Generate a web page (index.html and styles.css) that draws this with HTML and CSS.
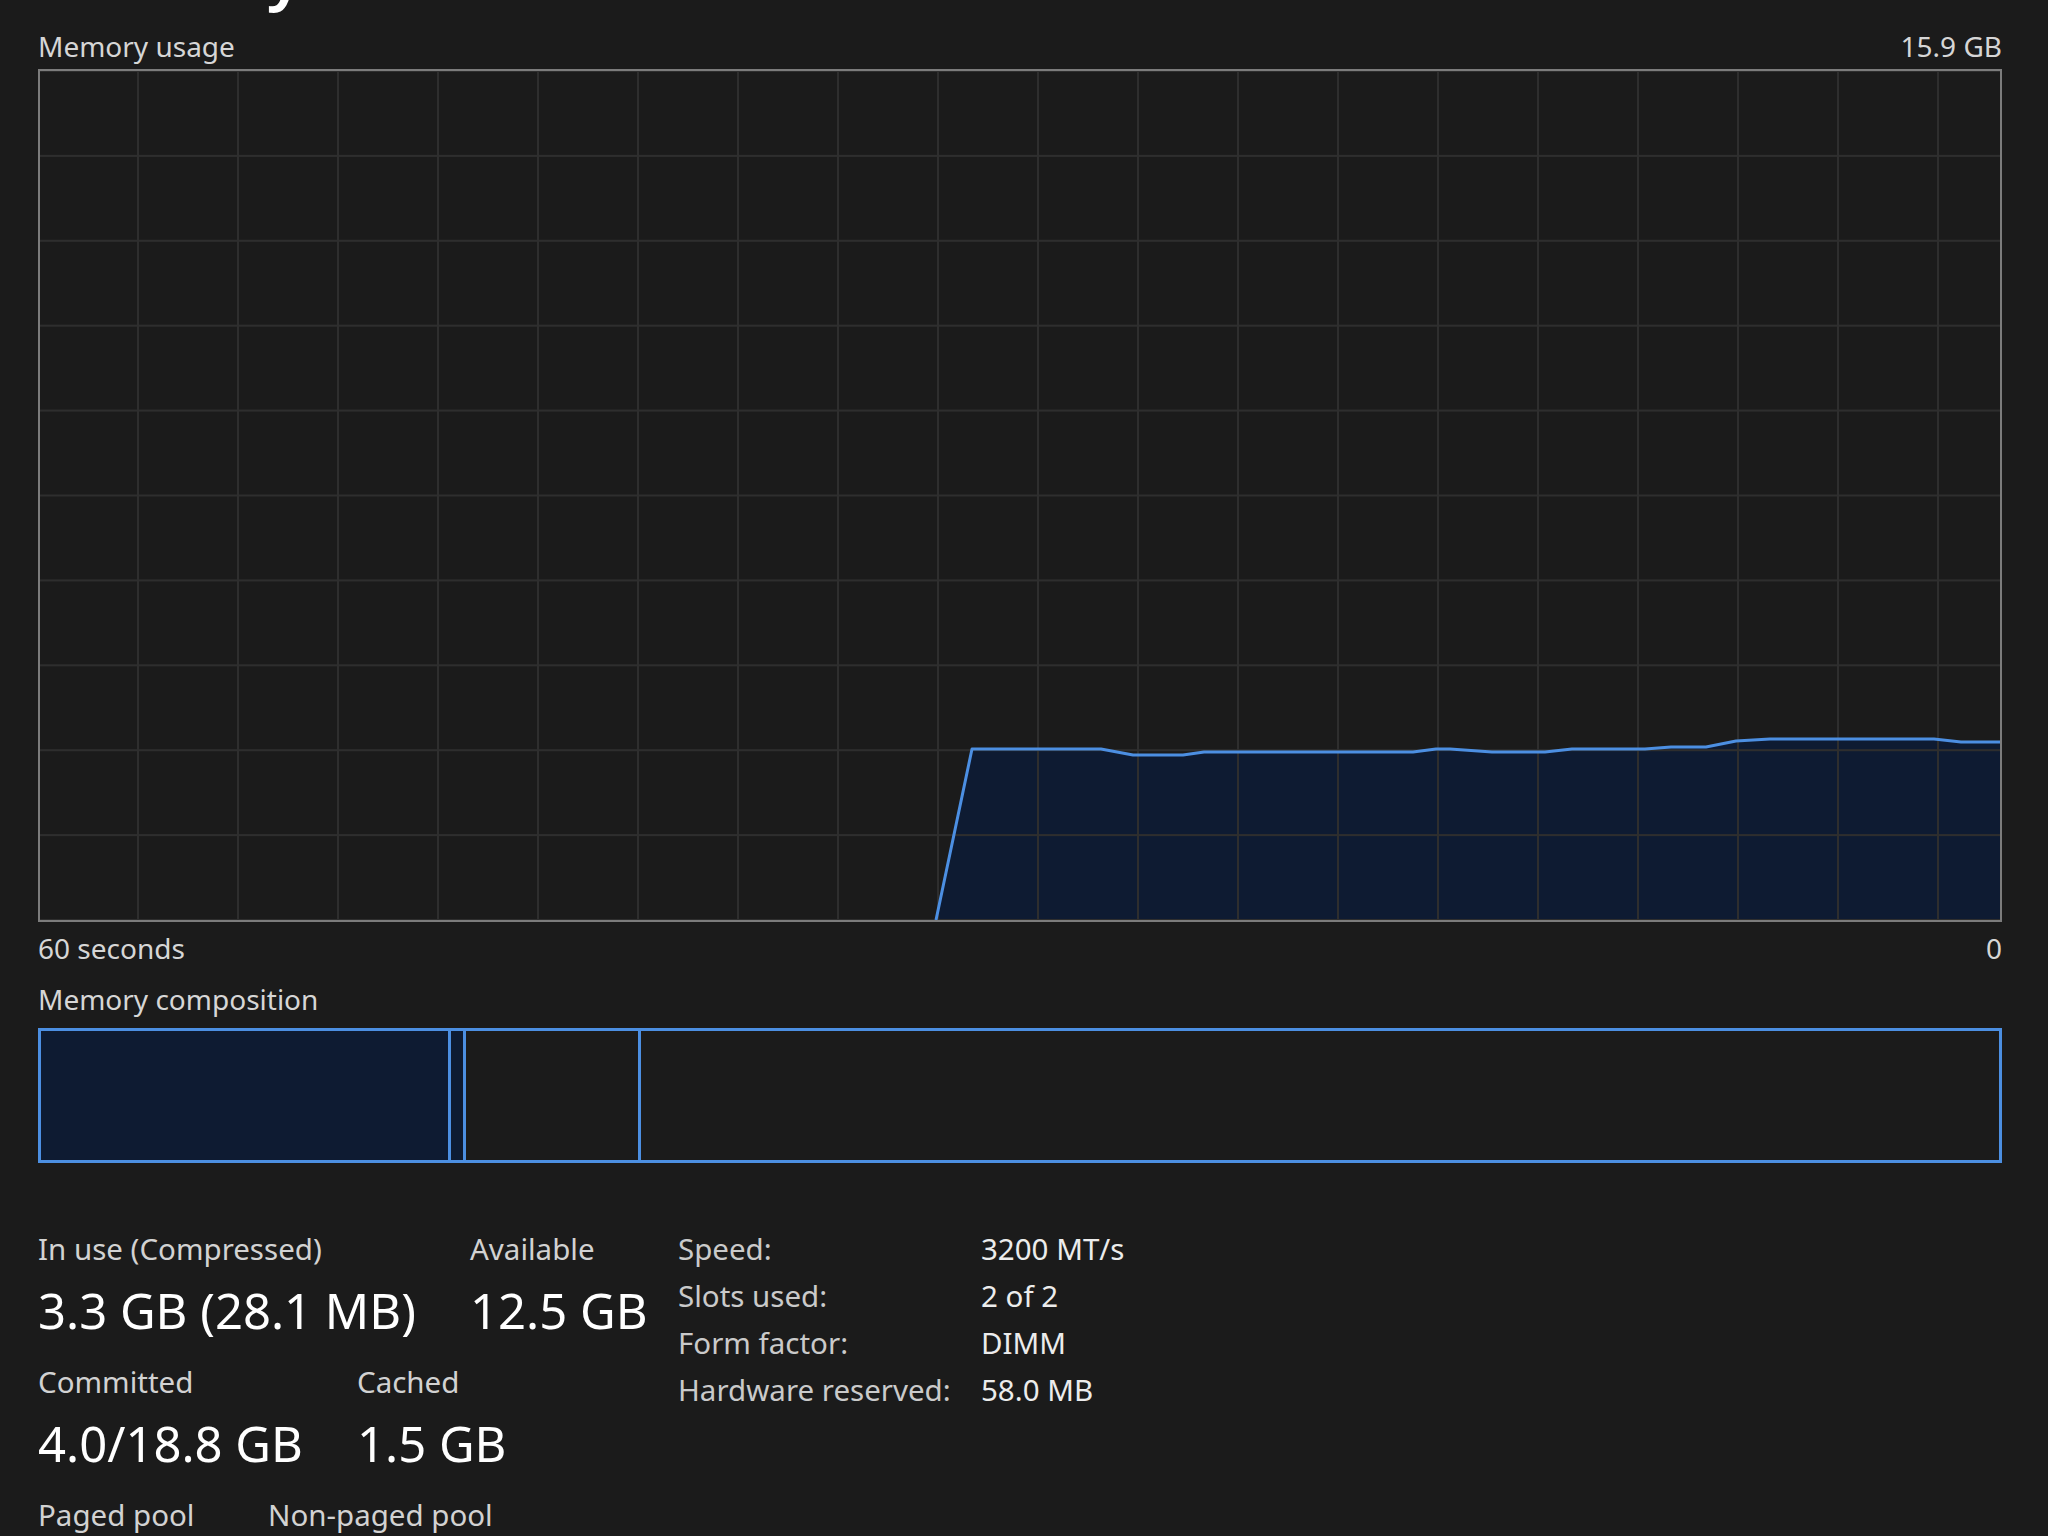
FILE: index.html
```html
<!DOCTYPE html>
<html lang="en">
<head>
  <meta charset="UTF-8" />
  <title>Memory</title>
  <link rel="stylesheet" href="styles.css">
</head>
<body>

  <div class="page">
    <h1 class="title">Memory</h1>

    <div class="chart-head">
      <span>Memory usage</span>
      <span>15.9 GB</span>
    </div>

    <div class="chart">
      <svg viewBox="0 0 1960 849" preserveAspectRatio="none">
        <defs>
          <!-- one grid cell: 20 columns of 100, 10 rows -->
          <pattern id="grid" width="100" height="84.9" x="97" y="-1" patternUnits="userSpaceOnUse">
            <path d="M1 0V84.9M0 1H100" fill="none" stroke="#2e2e2e" stroke-width="2" />
          </pattern>
        </defs>
        <polygon class="usage-fill"
          points="896,849 932,678 1061,678 1093,684 1143,684 1164,681 1373,681 1396,678 1410,678 1452,681 1505,681 1532,678 1605,678 1631,676 1666,676 1696,670 1730,668 1894,668 1921,671 1960,671 1960,849" />
        <rect class="grid-cells" width="1960" height="849" fill="url(#grid)" />
        <polyline class="usage-line"
          points="896,849 932,678 1061,678 1093,684 1143,684 1164,681 1373,681 1396,678 1410,678 1452,681 1505,681 1532,678 1605,678 1631,676 1666,676 1696,670 1730,668 1894,668 1921,671 1960,671" />
      </svg>
    </div>

    <div class="chart-axis">
      <span>60 seconds</span>
      <span>0</span>
    </div>

    <div class="section-label">Memory composition</div>
    <div class="composition">
      <div class="seg seg-inuse"></div>
      <div class="seg seg-modified"></div>
      <div class="seg seg-standby"></div>
      <div class="seg seg-free"></div>
    </div>

    <div class="stats">
      <div class="stats-main">
        <div class="stat-row">
          <div class="stat stat-inuse">
            <div class="stat-label">In use (Compressed)</div>
            <div class="stat-value">3.3 GB (28.1 MB)</div>
          </div>
          <div class="stat">
            <div class="stat-label">Available</div>
            <div class="stat-value">12.5 GB</div>
          </div>
        </div>
        <div class="stat-row">
          <div class="stat stat-committed">
            <div class="stat-label">Committed</div>
            <div class="stat-value">4.0/18.8 GB</div>
          </div>
          <div class="stat">
            <div class="stat-label">Cached</div>
            <div class="stat-value">1.5 GB</div>
          </div>
        </div>
        <div class="stat-row">
          <div class="stat stat-paged">
            <div class="stat-label">Paged pool</div>
            <div class="stat-value">312 MB</div>
          </div>
          <div class="stat">
            <div class="stat-label">Non-paged pool</div>
            <div class="stat-value">218 MB</div>
          </div>
        </div>
      </div>

      <dl class="specs">
        <dt>Speed:</dt><dd>3200 MT/s</dd>
        <dt>Slots used:</dt><dd>2 of 2</dd>
        <dt>Form factor:</dt><dd>DIMM</dd>
        <dt>Hardware reserved:</dt><dd>58.0 MB</dd>
      </dl>
    </div>
  </div>

</body>
</html>
```

FILE: styles.css
```css
* {
  box-sizing: border-box;
  margin: 0;
  padding: 0;
}

html, body {
  height: 100%;
  overflow: hidden;
}

body {
  font-family: "Noto Sans", "Open Sans", sans-serif;
  font-size: 28px;
  background: #1b1b1b;
  color: #d6d6d6;
}

.page {
  padding: 0 46px 0 38px;
}

.title {
  font-size: 65px;
  font-weight: 600;
  line-height: 64px;
  color: #fff;
  margin: -60px 0 24px;
}

.chart-head,
.chart-axis {
  display: flex;
  justify-content: space-between;
  line-height: 36px;
}

.chart-head {
  margin-bottom: 5px;
}

.chart {
  height: 853px;
  border: 2px solid #7c7c7c;
}

.chart svg {
  display: block;
  width: 100%;
  height: 100%;
}

.usage-fill {
  fill: #0e1b32;
}

.usage-line {
  fill: none;
  stroke: #4c8fe2;
  stroke-width: 3;
  stroke-linejoin: round;
}

.chart-axis {
  margin-top: 8px;
}

.section-label {
  margin-top: 15px;
  line-height: 36px;
}

/* memory composition bar */
.composition {
  display: flex;
  height: 135px;
  margin-top: 11px;
}

.seg {
  border: 3px solid #4c8fe2;
}
.seg + .seg {
  border-left: 0;
}

.seg-inuse {
  width: 413px;
  background: #0e1b32;
}
.seg-modified {
  width: 15px;
  background: #0e1b32;
}
.seg-standby {
  width: 175px;
}
.seg-free {
  flex: 1;
}

/* stats under the bar */
.stats {
  display: flex;
  align-items: flex-start;
  margin-top: 68px;
  font-size: 29.5px;
}

.stats-main {
  width: 640px;
}

.stat-row {
  display: flex;
}
.stat-row + .stat-row {
  margin-top: 24px;
}

.stat-label {
  line-height: 36px;
  color: #d2d2d2;
}

.stat-value {
  font-size: 49px;
  line-height: 60px;
  margin-top: 13px;
  color: #fff;
}

.stat-inuse {
  width: 432px;
}
.stat-committed {
  width: 319px;
}
.stat-paged {
  width: 230px;
}

.specs {
  display: grid;
  grid-template-columns: 303px auto;
  row-gap: 11px;
  line-height: 36px;
}
.specs dt {
  color: #cacaca;
}
.specs dd {
  color: #ececec;
}
```
